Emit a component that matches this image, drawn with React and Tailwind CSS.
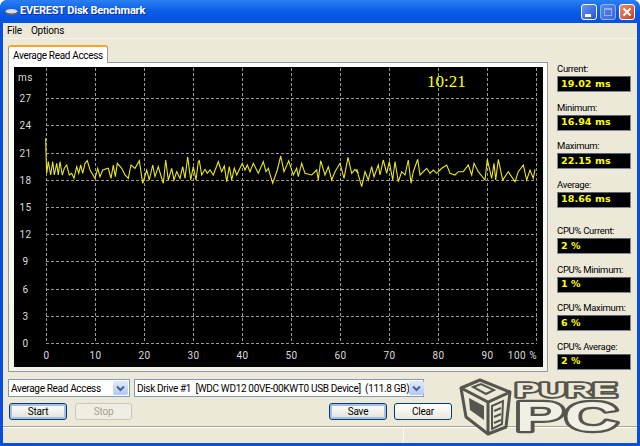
const seg6 = [[47,25],[48,70],[50,130],[55,95],[62,135],[68,95],[73,135],[80,100],[85,135],[90,95],[97,135],[103,115],[110,105],[118,135],[125,130],[132,145],[140,110],[146,130],[152,105],[158,130],[165,100],[172,92],[180,120],[195,145],[203,115],[210,140],[218,120],[235,115],[243,145],[250,105],[256,140],[262,100],[275,115],[285,135],[295,145],[303,105],[315,115],[328,92],[338,160],[350,120],[358,150],[368,105],[375,140],[385,110],[392,135],[400,160],[407,90],[415,150],[425,115],[432,150],[440,125],[450,145],[458,110],[465,145],[473,80],[482,150],[490,110],[498,150],[505,95]];
const seg7 = [[28,92],[35,135],[45,118],[52,130],[60,120],[70,135],[85,95],[95,125],[103,108],[110,155],[118,110],[125,150],[133,115],[140,135],[157,100],[165,120],[172,105],[180,125],[190,100],[205,130],[220,95],[228,125],[235,115],[248,160],[262,120],[272,78],[282,125],[296,92],[310,135],[320,115],[325,140],[335,100],[345,130],[365,135],[380,120],[385,150],[392,92],[405,135],[415,110],[425,150],[435,125],[450,100],[462,145],[474,82],[485,130],[495,118],[505,130]];
const seg8 = [[20,118],[35,170],[45,125],[55,150],[65,110],[72,140],[85,105],[90,135],[100,90],[110,130],[118,95],[128,150],[135,95],[145,155],[155,125],[165,135],[175,90],[183,160],[190,125],[203,88],[210,135],[230,115],[240,130],[250,120],[260,130],[275,115],[290,105],[300,130],[315,135],[325,125],[340,125],[355,105],[365,135],[372,100],[385,125],[405,150],[412,88],[425,145],[432,100],[437,150],[445,88],[458,150],[475,125],[495,155],[505,125],[520,105],[530,150],[540,120],[550,145],[555,118]];
const toPts = (seg, ox) => seg.map(([x, y]) => `${(ox + x / 3).toFixed(1)},${(130 + y / 3).toFixed(1)}`).join(" ");
const linePts = [toPts(seg6, 30), toPts(seg7, 190), toPts(seg8, 350)].join(" ");

const ui = { fontFamily: 'Roboto, "Liberation Sans", Arial, sans-serif' };

function Chart() {
  const xs = [0, 1, 2, 3, 4, 5, 6, 7, 8, 9, 10];
  const ys = [0, 1, 2, 3, 4, 5, 6, 7, 8, 9];
  return (
    <svg viewBox="14 67 529 300" className="block w-[529px] h-[300px] bg-black" style={{ fontFamily: 'Roboto, sans-serif' }}>
      {xs.map((i) => (
        <line key={i} x1={46.5 + 49 * i} x2={46.5 + 49 * i} y1="68" y2="343.5" stroke="#9a9a9a" strokeDasharray="3 2" />
      ))}
      {ys.map((k) => (
        <line key={k} x1="46" x2="537" y1={Math.round(343 - 27.2 * k) + 0.5} y2={Math.round(343 - 27.2 * k) + 0.5} stroke="#9a9a9a" strokeDasharray="3 2" />
      ))}
      <polyline points={linePts} fill="none" stroke="#e8e81c" strokeWidth="1.1" />
      <text x="25.5" y="81" fontSize="10" fill="#dcdcdc" textAnchor="middle" letterSpacing="0.6">ms</text>
      {ys.map((k) => (
        <text key={k} x="25.5" y={Math.round(343 - 27.2 * k) + 4} fontSize="10" fill="#dcdcdc" textAnchor="middle" letterSpacing="0.5">{k * 3}</text>
      ))}
      {xs.slice(0, 10).map((i) => (
        <text key={i} x={46.5 + 49 * i} y="359" fontSize="10" fill="#dcdcdc" textAnchor="middle" letterSpacing="0.5">{i * 10}</text>
      ))}
      <text x="537" y="359" fontSize="10" fill="#dcdcdc" textAnchor="end" letterSpacing="0.5">100 %</text>
      <text x="427" y="87" fontSize="17" fill="#ffff00" style={{ fontFamily: '"Liberation Serif", serif' }}>10:21</text>
    </svg>
  );
}

function Stat({ label, value, extra }) {
  return (
    <div className={`h-[38.5px] flex flex-col ${extra || ""}`}>
      <div className="h-[15px] leading-[15px] text-[9.5px] tracking-[-0.3px] text-black whitespace-nowrap">{label}</div>
      <div className="w-[74px] h-[16px] bg-black border border-[#7f8a96] border-t-[#5a6470] flex items-center pl-[3px] text-[#ffff00] font-bold text-[9.5px] tracking-[0.1px] whitespace-nowrap" style={{ fontFamily: '"DejaVu Sans", sans-serif' }}>
        {value}
      </div>
    </div>
  );
}

function Combo({ w, children }) {
  return (
    <div className={`${w} h-[18px] bg-white border border-[#7f9db9] flex items-center justify-between pl-[2px] pr-[1px]`}>
      <span className="text-[10px] tracking-[-0.33px] text-black whitespace-pre">{children}</span>
      <span className="w-[15px] h-[14px] rounded-[2px] bg-gradient-to-b from-[#dfe9fc] to-[#b3c9f5] flex items-center justify-center shrink-0">
        <svg width="9" height="7" viewBox="0 0 9 7"><path d="M1 1.5 L4.5 5 L8 1.5" fill="none" stroke="#4d6185" strokeWidth="2" /></svg>
      </span>
    </div>
  );
}

function Btn({ w, children, primary, disabled }) {
  const base = disabled
    ? "border-[#c9c7ba] text-[#a3a194] bg-[#f0eee2]"
    : primary
    ? "border-[#003c74] text-black bg-gradient-to-b from-white to-[#e3e2d8] shadow-[inset_0_0_0_2px_#a6bfe6]"
    : "border-[#003c74] text-black bg-gradient-to-b from-white to-[#ebe9dd]";
  return (
    <div className={`${w} h-[17px] rounded-[3px] border ${base} flex items-center justify-center text-[10px] tracking-[-0.2px]`}>{children}</div>
  );
}

function Logo() {
  const dark = "#55554d";
  const light = "#ece9d8";
  return (
    <svg className="absolute left-[458px] top-[378px] overflow-visible" width="164" height="60" viewBox="458 378 164 60" style={{ fontFamily: '"Liberation Sans", sans-serif' }}>
      <path d="M461 388 L480 380 L510 392 L506 427 L488 434 L466 417 Z" fill={light} stroke={dark} strokeWidth="3" strokeLinejoin="round" />
      <path d="M461 388 L488 402 L510 392 M488 402 L488 434" fill="none" stroke={dark} strokeWidth="3" />
      <path d="M473 387 L481 384 L494 390 L486 394 Z" fill="none" stroke={dark} strokeWidth="2" />
      <path d="M469 398 L484 406 L484 420 L470 410 Z" fill={dark} />
      <path d="M492 406 L503 401 L502 424 L492 429 Z" fill="none" stroke={dark} strokeWidth="2" />
      <path d="M494 411 L501 408 M494 417 L501 414 M494 423 L501 420" stroke={dark} strokeWidth="2" />
      <text x="515" y="397" fontSize="20" fontWeight="700" fill={light} stroke={dark} strokeWidth="3.5" strokeLinejoin="round" textLength="102" lengthAdjust="spacingAndGlyphs" style={{ paintOrder: "stroke" }}>PURE</text>
      <text x="515" y="431" fontSize="43" fontWeight="700" fill="#f2f0e4" stroke={dark} strokeWidth="4.5" strokeLinejoin="round" textLength="103" lengthAdjust="spacingAndGlyphs" style={{ paintOrder: "stroke" }}>PC</text>
    </svg>
  );
}

export default function App() {
  return (
    <div className="relative w-[640px] h-[446px] overflow-hidden flex flex-col bg-[#0a4fdc] rounded-t-[7px]" style={ui}>
      {/* title bar */}
      <div className="h-[23px] shrink-0 flex items-center pl-[5px] pr-[5px] bg-gradient-to-b from-[#2a7ff2] via-[#0a5be6] to-[#0552de] rounded-t-[7px]">
        <svg width="13" height="9" viewBox="0 0 13 9" className="mr-[2px] mt-[1px]">
          <ellipse cx="6.5" cy="3.5" rx="6" ry="2.5" fill="#d8dce4" />
          <path d="M0.5 3.5 L0.5 5.5 C2 8 11 8 12.5 5.5 L12.5 3.5 C11 6 2 6 0.5 3.5 Z" fill="#59616e" />
        </svg>
        <span className="text-white font-bold text-[11px] tracking-[-0.2px] [text-shadow:1px_1px_0_#0a2f9a] whitespace-nowrap">EVEREST Disk Benchmark</span>
        <div className="ml-auto flex gap-[3px] items-center">
          <div className="relative w-[16px] h-[16px] rounded-[3px] border border-white bg-gradient-to-br from-[#6f95ee] to-[#2050d8]">
            <div className="absolute left-[3px] bottom-[2px] w-[6px] h-[3px] bg-white" />
          </div>
          <div className="relative w-[16px] h-[16px] rounded-[3px] border border-[#8fb0f2] bg-gradient-to-br from-[#5a86ea] to-[#3a68dc]">
            <div className="absolute left-[3px] top-[3px] w-[8px] h-[8px] border border-[#8fb0f2] border-t-2" />
          </div>
          <div className="w-[16px] h-[16px] rounded-[3px] border border-white bg-gradient-to-br from-[#e89070] to-[#c83a18] flex items-center justify-center">
            <svg width="10" height="10" viewBox="0 0 10 10"><path d="M1.5 1.5 L8.5 8.5 M8.5 1.5 L1.5 8.5" stroke="#fff" strokeWidth="2" /></svg>
          </div>
        </div>
      </div>

      {/* client */}
      <div className="flex-1 mx-[3px] mb-[3px] bg-[#ece9d8] flex flex-col min-h-0">
        <div className="h-[16px] shrink-0 flex items-center gap-[9px] pl-[4px] text-[10px] tracking-[-0.2px] text-black border-b border-[#f6f4ea]">
          <span>File</span>
          <span>Options</span>
        </div>
        <div className="flex-1 flex min-h-0">
          {/* left */}
          <div className="w-[545px] shrink-0 pl-[5px] pt-[6px]">
            <div className="relative z-10 w-[100px] h-[18px] -mb-[1px] bg-white border border-[#919b9c] border-b-0 border-t-2 border-t-[#f5a623] rounded-t-[3px] flex items-center justify-center text-[10px] tracking-[-0.33px] text-black whitespace-nowrap">
              Average Read Access
            </div>
            <div className="w-[540px] h-[310px] border border-[#919b9c] bg-gradient-to-b from-white to-[#f4f3ea] pl-[5px] pt-[4px]">
              <Chart />
            </div>
            <div className="flex gap-[4px] mt-[7px]">
              <Combo w="w-[122px]">Average Read Access</Combo>
              <Combo w="w-[290px]">{"Disk Drive #1  [WDC WD12 00VE-00KWT0 USB Device]  (111.8 GB)"}</Combo>
            </div>
            <div className="flex mt-[6px] pl-[1px]">
              <Btn w="w-[58px]" primary>Start</Btn>
              <div className="w-[8px]" />
              <Btn w="w-[57px]" disabled>Stop</Btn>
              <div className="w-[197px]" />
              <Btn w="w-[58px]" primary>Save</Btn>
              <div className="w-[7px]" />
              <Btn w="w-[58px]">Clear</Btn>
            </div>
          </div>
          {/* stats */}
          <div className="pl-[9px] pt-[22px] flex flex-col">
            <Stat label="Current:" value="19.02 ms" />
            <Stat label="Minimum:" value="16.94 ms" />
            <Stat label="Maximum:" value="22.15 ms" />
            <Stat label="Average:" value="18.66 ms" />
            <Stat label="CPU% Current:" value="2 %" extra="mt-[8px]" />
            <Stat label="CPU% Minimum:" value="1 %" />
            <Stat label="CPU% Maximum:" value="6 %" />
            <Stat label="CPU% Average:" value="2 %" />
          </div>
        </div>
        {/* status bar */}
        <div className="h-[17px] shrink-0 border-t border-[#a6a493] flex shadow-[inset_0_1px_0_#fff]">
          <div className="w-[401px] border-r border-[#fbfaf4]" />
        </div>
      </div>
      <Logo />
    </div>
  );
}
